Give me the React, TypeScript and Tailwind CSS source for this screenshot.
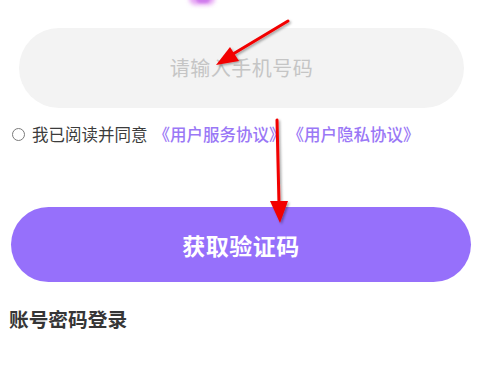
import React from "react";

export default function App() {
  return (
    <div
      className="relative w-[477px] h-[369px] bg-white overflow-hidden"
      style={{ fontFamily: '"Noto Sans CJK SC", "Noto Sans", sans-serif' }}
    >
      {/* purple decoration peeking at top */}
      <div className="absolute left-[189px] top-[-8px] w-[26px] h-[13px] rounded-full bg-[#e6a6f4] blur-[2px]" />
      <div className="absolute left-[196px] top-[-6px] w-[14px] h-[9px] rounded-full bg-[#cf7cec] blur-[1px]" />

      <div className="flex flex-col">
        <div className="ml-[19px] mt-[28px] w-[445px] h-[80px] rounded-full bg-[#f3f3f3] flex items-center justify-center">
          <span className="text-[20px] leading-[24px] text-[#c5c5c5] tracking-[0.5px]">请输入手机号码</span>
        </div>

        <div className="mt-[15px] ml-[12px] flex items-center h-[22px]">
          <span className="w-[13px] h-[13px] rounded-full border-[1.5px] border-[#7a7a7a] box-border" />
          <span className="ml-[7px] text-[16.5px] leading-[22px] text-[#3c3c3c]">我已阅读并同意</span>
          <span className="ml-[6px] text-[16.5px] leading-[22px] font-medium text-[#9a78f6]">《用户服务协议》</span>
          <span className="ml-[2px] text-[16.5px] leading-[22px] font-medium text-[#9a78f6]">《用户隐私协议》</span>
        </div>

        <div className="ml-[11px] mt-[62px] w-[460px] h-[75px] rounded-full bg-[#9670fb] flex items-center justify-center">
          <span className="text-[23px] leading-[28px] font-bold text-white tracking-[0.5px]">获取验证码</span>
        </div>

        <div className="ml-[9px] mt-[24px] text-[19.7px] leading-[25px] font-bold text-[#363636]">账号密码登录</div>
      </div>

      {/* red annotation arrows */}
      <svg className="absolute left-0 top-0 pointer-events-none" width="477" height="369" viewBox="0 0 477 369">
        <defs>
          <filter id="sh" x="-20%" y="-20%" width="140%" height="140%">
            <feDropShadow dx="1.5" dy="1.5" stdDeviation="1.2" floodColor="#000" floodOpacity="0.35" />
          </filter>
        </defs>
        <g filter="url(#sh)">
          <line x1="288" y1="21" x2="228" y2="57" stroke="#f20000" strokeWidth="3" strokeLinecap="round" />
          <polygon points="216,65 230,47 239,61" fill="#f20000" />
          <line x1="277" y1="120" x2="279" y2="204" stroke="#f20000" strokeWidth="3" strokeLinecap="round" />
          <polygon points="280,223 270,201 288,201" fill="#f20000" />
        </g>
      </svg>
    </div>
  );
}
